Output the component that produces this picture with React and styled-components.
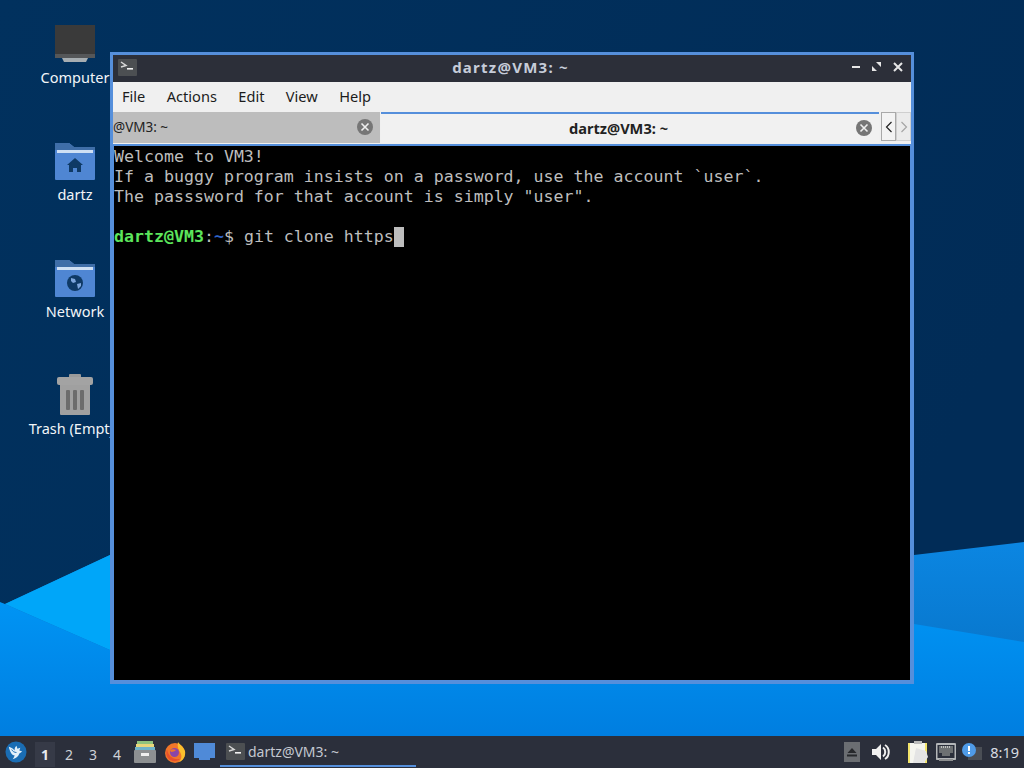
import React from "react";
import styled, { createGlobalStyle } from "styled-components";

const GlobalStyle = createGlobalStyle`
  html, body {
    margin: 0;
    padding: 0;
    width: 1024px;
    height: 768px;
    overflow: hidden;
    background: #012d59;
  }
  * { box-sizing: border-box; }
`;

const Desktop = styled.div`
  position: relative;
  width: 1024px;
  height: 768px;
  display: flex;
  flex-direction: column;
  overflow: hidden;
  font-family: "Noto Sans", sans-serif;
`;

const Wallpaper = styled.svg`
  position: absolute;
  top: 0;
  left: 0;
`;

const Workspace = styled.div`
  position: relative;
  flex: 1;
`;

const IconColumn = styled.div`
  width: 150px;
  padding-top: 20px;
  display: flex;
  flex-direction: column;
`;

const DesktopIcon = styled.div`
  height: 117px;
  display: flex;
  flex-direction: column;
  align-items: center;
  color: #f2f5f8;
  font-size: 14.5px;
  line-height: 20px;
  white-space: nowrap;
`;

const IconSlot = styled.div`
  height: 47px;
  display: flex;
  align-items: center;
  justify-content: center;
`;

const Window = styled.div`
  position: absolute;
  left: 110px;
  top: 52px;
  width: 804px;
  height: 632px;
  border: 3px solid #558fdb;
  background: #f0f0f0;
  display: flex;
  flex-direction: column;
`;

const TitleBar = styled.div`
  height: 27px;
  flex: none;
  background: #2c2f39;
  color: #c6ccd9;
  display: flex;
  align-items: center;
  padding: 0 8px 3px 5px;
`;

const Title = styled.div`
  flex: 1;
  text-align: center;
  font-size: 15px;
  font-weight: 700;
  letter-spacing: 1.25px;
  margin-left: 33px;
`;

const WindowButtons = styled.div`
  display: flex;
  align-items: center;
  gap: 11px;
`;

const MenuBar = styled.div`
  height: 30px;
  flex: none;
  display: flex;
  align-items: center;
  gap: 21.4px;
  padding: 0 0 2px 9px;
  font-size: 14.6px;
  color: #1c1c1c;
`;

const TabBar = styled.div`
  height: 34px;
  flex: none;
  display: flex;
  align-items: stretch;
  border-bottom: 2px solid #558fdb;
`;

const Tab = styled.div`
  height: 31px;
  display: flex;
  align-items: center;
  background: ${(p) => (p.$active ? "#f1f1f1" : "#bdbdbd")};
  border-top: ${(p) => (p.$active ? "2px solid #558fdb" : "none")};
  width: ${(p) => (p.$active ? "498px" : "267px")};
  margin-right: ${(p) => (p.$active ? "2px" : "1px")};
  padding: 0 7px 1px 0;
  font-size: ${(p) => (p.$active ? "14.6px" : "13.5px")};
  font-weight: ${(p) => (p.$active ? 700 : 400)};
  color: #222;
`;

const TabLabel = styled.div`
  flex: 1;
  text-align: ${(p) => (p.$active ? "center" : "left")};
`;

const CloseCircle = styled.div`
  width: 16px;
  height: 16px;
  border-radius: 50%;
  background: #767676;
  display: flex;
  align-items: center;
  justify-content: center;
`;

const ScrollButton = styled.div`
  width: 15px;
  height: 29px;
  background: ${(p) => (p.$disabled ? "#ebebeb" : "#f3f3f3")};
  border: 1px solid ${(p) => (p.$disabled ? "#cfcfcf" : "#a9a9a9")};
  display: flex;
  align-items: center;
  justify-content: center;
`;

const Terminal = styled.div`
  flex: 1;
  background: #000;
  border: solid #558fdb;
  border-width: 0 1px 1px 1px;
  padding-top: 1px;
  font-family: "DejaVu Sans Mono", monospace;
  font-size: 16.6px;
  line-height: 20px;
  color: #bdbdbd;
  white-space: pre;
`;

const TermLine = styled.div`
  height: 20px;
  display: flex;
`;

const PromptUser = styled.span`
  color: #5ce65c;
  font-weight: 700;
`;

const PromptPath = styled.span`
  color: #2f63c8;
  font-weight: 700;
`;

const Cursor = styled.span`
  display: inline-block;
  width: 10px;
  height: 20px;
  background: #bdbdbd;
`;

// position: relative keeps the bar above the wallpaper svg
const Taskbar = styled.div`
  position: relative;
  height: 32px;
  flex: none;
  background: #2b2f3b;
  display: flex;
  align-items: center;
  color: #d5d8de;
`;

const StartButton = styled.div`
  width: 33px;
  padding-left: 5px;
  display: flex;
  align-items: center;
`;

const Pager = styled.div`
  display: flex;
  margin-right: 4px;
`;

const PagerItem = styled.div`
  width: 20px;
  height: 25px;
  margin: 4px 2px 0;
  display: flex;
  align-items: center;
  justify-content: center;
  font-size: 14px;
  font-weight: ${(p) => (p.$active ? 700 : 400)};
  background: ${(p) => (p.$active ? "#363a47" : "transparent")};
  color: ${(p) => (p.$active ? "#e8eaee" : "#cfd2d8")};
`;

const Launchers = styled.div`
  display: flex;
  align-items: center;
  gap: 8px;
  margin-left: 1px;
`;

const TaskButton = styled.div`
  width: 196px;
  height: 30px;
  margin: 0 0 0 5px;
  padding: 0 6px 0 6px;
  display: flex;
  align-items: center;
  gap: 3px;
  font-size: 14px;
  color: #c4c8d0;
  border-bottom: 2px solid #558fdb;
`;

const Tray = styled.div`
  margin-left: auto;
  display: flex;
  align-items: center;
  padding-right: 5px;
`;

const TrayItem = styled.div`
  display: flex;
  align-items: center;
  margin-right: ${(p) => p.$gap || 0}px;
`;

const Clock = styled.div`
  font-size: 14.5px;
  color: #d8dbe0;
  margin-left: 8px;
`;

const ComputerIcon = () => (
  <svg width="42" height="40" viewBox="0 0 42 40">
    <rect x="1" y="1" width="40" height="30" fill="#3a3a3a" />
    <rect x="1" y="30" width="40" height="4" fill="#555759" />
    <path d="M8 34h26l-2 4H10z" fill="#a6adb1" />
  </svg>
);

const FolderIcon = ({ children }) => (
  <svg width="42" height="38" viewBox="0 0 42 38">
    <path d="M1 2a1 1 0 0 1 1-1h13l5 4h21v32a1 1 0 0 1-1 1H2a1 1 0 0 1-1-1z" fill="#4f86d3" />
    <path d="M1 2a1 1 0 0 1 1-1h13l5 4h21v3H5l-4 0z" fill="#3f6ea8" />
    <rect x="3" y="8" width="36" height="3" fill="#cfe0f4" />
    {children}
  </svg>
);

const HomeGlyph = () => (
  <path d="M21 16l-8 7h2v7h4v-4h4v4h4v-7h2z" fill="#0f3a66" />
);

const GlobeGlyph = () => (
  <g>
    <circle cx="21" cy="24" r="8" fill="#0f3a66" />
    <path d="M17 19l4 1 1 3-3 1-2-2zM23 25l4-1 0 3-3 3z" fill="#7ea6dc" />
  </g>
);

const TrashIcon = () => (
  <svg width="38" height="42" viewBox="0 0 38 42">
    <rect x="13" y="0" width="12" height="4" rx="1" fill="#9a9a9a" />
    <rect x="1" y="3" width="36" height="8" rx="2" fill="#a3a3a3" />
    <path d="M4 11h30v29a1 1 0 0 1-1 1H5a1 1 0 0 1-1-1z" fill="#a0a0a0" />
    <rect x="10" y="16" width="4" height="20" rx="1" fill="#6c6c6c" />
    <rect x="17" y="16" width="4" height="20" rx="1" fill="#6c6c6c" />
    <rect x="24" y="16" width="4" height="20" rx="1" fill="#6c6c6c" />
  </svg>
);

const TerminalGlyph = ({ size = 19 }) => (
  <svg width={size} height={size - 2} viewBox="0 0 19 17">
    <rect width="19" height="17" rx="1" fill="#4c4f52" />
    <path d="M3 3l5 3.5L3 8" fill="none" stroke="#d8d8d8" strokeWidth="1.5" />
    <rect x="9" y="9" width="6" height="1.6" fill="#f2f2f2" />
  </svg>
);

const CloseX = () => (
  <svg width="10" height="10" viewBox="0 0 10 10">
    <path d="M1.5 1.5l7 7M8.5 1.5l-7 7" stroke="#eee" strokeWidth="1.6" />
  </svg>
);

const Lubuntu = () => (
  <svg width="22" height="22" viewBox="0 0 23 23">
    <circle cx="11.5" cy="11.5" r="11" fill="#1a6db4" />
    <path d="M4 6c3 1 4.500 2 6 4 0-2 .5-4 2-5l1 3 3-1-1 3 3 1-3 2c-1 3-3 5-7 6 1-1 2-3 2-4-3 0-5-4-6-9z" fill="#e3f0fa" />
    <path d="M7 9c1 2 3 3 5 3" fill="none" stroke="#1a6db4" strokeWidth="1" />
  </svg>
);

const FilesIcon = () => (
  <svg width="22" height="22" viewBox="0 0 22 22">
    <rect x="3" y="0" width="16" height="4" fill="#8fc37c" />
    <rect x="2" y="3" width="18" height="3" fill="#e8d67a" />
    <rect x="1" y="6" width="20" height="3" fill="#6fb3c9" />
    <rect x="0" y="9" width="22" height="13" rx="1" fill="#8d9092" />
    <rect x="7" y="12" width="8" height="3" fill="#f0f0f0" />
  </svg>
);

const FirefoxIcon = () => (
  <svg width="22" height="22" viewBox="0 0 22 22">
    <circle cx="11" cy="12" r="10" fill="#f0762a" />
    <path d="M14 1c1 2 5 4 7 9 1 5-2 10-6 11 3-3 3-7 1-10-1-2-3-4-2-10z" fill="#fbc02d" />
    <circle cx="10.500" cy="11.500" r="4.500" fill="#8a46a8" />
    <path d="M6 9c2-1 4-1 6 0-1 1-3 2-5 2z" fill="#f0762a" />
    <path d="M3 8c1 7 6 11 13 10-3 3-9 3-12-1-2-2-2-6-1-9z" fill="#e8502c" />
  </svg>
);

const DesktopSwitcher = () => (
  <svg width="21" height="19" viewBox="0 0 21 19">
    <path d="M0 0h21v15h-5v2h-11v-2H0z" fill="#4f8ad8" />
  </svg>
);

const EjectIcon = () => (
  <svg width="16" height="20" viewBox="0 0 16 20">
    <rect width="16" height="20" fill="#6b6e72" />
    <path d="M8 6l4.500 5h-9z" fill="#27292c" />
    <rect x="3" y="12.500" width="10" height="2" fill="#27292c" />
  </svg>
);

const VolumeIcon = () => (
  <svg width="18" height="16" viewBox="0 0 18 16">
    <path d="M0 5h4l5-5v16l-5-5H0z" fill="#f0f0f0" />
    <path d="M11 3.500c3 2 3 7 0 9M13 1c5 3 5 11 0 14" fill="none" stroke="#f0f0f0" strokeWidth="2" />
  </svg>
);

const ClipboardIcon = () => (
  <svg width="21" height="22" viewBox="0 0 21 22">
    <rect x="0" y="2" width="19" height="20" fill="#f2e46a" />
    <rect x="2" y="2" width="15" height="20" fill="#f5f5ef" />
    <rect x="6" y="0" width="8" height="3" fill="#bbb" />
    <path d="M8 7l10 3 2 6-4 6H5z" fill="#e4e4e4" />
  </svg>
);

const NetworkIcon = () => (
  <svg width="20" height="19" viewBox="0 0 20 19">
    <rect x="0.500" y="1" width="19" height="15" rx="1" fill="#2b2f3b" stroke="#b4b6b8" strokeWidth="2" />
    <path d="M3 3h14v7h-3v3H6v-3H3z" fill="#6d7072" />
    <path d="M5 4h10" stroke="#dcdcdc" strokeWidth="1.500" strokeDasharray="1 1" />
    <rect x="3" y="16" width="14" height="2" fill="#8d8f90" />
  </svg>
);

const NoticeIcon = () => (
  <svg width="20" height="18" viewBox="0 0 20 18">
    <rect x="6" y="4" width="14" height="13" fill="#4a4e55" />
    <circle cx="7" cy="7" r="7" fill="#4f9be8" />
    <rect x="6" y="3" width="2" height="5" fill="#fff" />
    <rect x="6" y="9" width="2" height="2" fill="#fff" />
  </svg>
);

const terminalLines = [
  "Welcome to VM3!",
  "If a buggy program insists on a password, use the account `user`.",
  'The passsword for that account is simply "user".',
  " ",
];

const App = () => {
  return (
    <Desktop>
      <GlobalStyle />
      <Wallpaper width="1024" height="768" viewBox="0 0 1024 768">
        <defs>
          <linearGradient id="night" x1="0" y1="0" x2="1" y2="0.4">
            <stop offset="0" stopColor="#01315e" />
            <stop offset="1" stopColor="#012c57" />
          </linearGradient>
          <linearGradient id="band" x1="0" y1="0" x2="0" y2="1">
            <stop offset="0" stopColor="#0b86e2" />
            <stop offset="1" stopColor="#0876cb" />
          </linearGradient>
          <linearGradient id="sea" x1="0" y1="0" x2="0" y2="1">
            <stop offset="0" stopColor="#0094f4" />
            <stop offset="1" stopColor="#0079db" />
          </linearGradient>
        </defs>
        <rect width="1024" height="768" fill="url(#night)" />
        <path d="M0 603 L5 604 L110 555 L914 555 L1024 542 L1024 660 L0 660Z" fill="url(#band)" />
        <path d="M5 604 L110 555 L110 650Z" fill="#00a6f9" />
        <path d="M0 602 L110 650 L914 624 L1024 642 L1024 768 L0 768Z" fill="url(#sea)" />
      </Wallpaper>

      <Workspace>
        <IconColumn>
          <DesktopIcon>
            <IconSlot><ComputerIcon /></IconSlot>
            Computer
          </DesktopIcon>
          <DesktopIcon>
            <IconSlot><FolderIcon><HomeGlyph /></FolderIcon></IconSlot>
            dartz
          </DesktopIcon>
          <DesktopIcon>
            <IconSlot><FolderIcon><GlobeGlyph /></FolderIcon></IconSlot>
            Network
          </DesktopIcon>
          <DesktopIcon>
            <IconSlot><TrashIcon /></IconSlot>
            Trash (Empty)
          </DesktopIcon>
        </IconColumn>

        <Window>
          <TitleBar>
            <TerminalGlyph />
            <Title>dartz@VM3: ~</Title>
            <WindowButtons>
              <svg width="10" height="10" viewBox="0 0 10 10"><rect x="1" y="4" width="8" height="2" fill="#e6e6e6" /></svg>
              <svg width="10" height="10" viewBox="0 0 10 10"><path d="M9 0v5L4 0zM0 9V4l5 5z" fill="#e6e6e6" /></svg>
              <svg width="10" height="10" viewBox="0 0 10 10"><path d="M1 1l8 8M9 1l-8 8" stroke="#e6e6e6" strokeWidth="2" /></svg>
            </WindowButtons>
          </TitleBar>
          <MenuBar>
            <span>File</span>
            <span>Actions</span>
            <span>Edit</span>
            <span>View</span>
            <span>Help</span>
          </MenuBar>
          <TabBar>
            <Tab>
              <TabLabel>@VM3: ~</TabLabel>
              <CloseCircle><CloseX /></CloseCircle>
            </Tab>
            <Tab $active>
              <TabLabel $active>dartz@VM3: ~</TabLabel>
              <CloseCircle><CloseX /></CloseCircle>
            </Tab>
            <ScrollButton>
              <svg width="8" height="12" viewBox="0 0 8 12"><path d="M6.500 1L1.500 6l5 5" fill="none" stroke="#222" strokeWidth="1.200" /></svg>
            </ScrollButton>
            <ScrollButton $disabled>
              <svg width="8" height="12" viewBox="0 0 8 12"><path d="M1.500 1l5 5-5 5" fill="none" stroke="#a5a5a5" strokeWidth="1.200" /></svg>
            </ScrollButton>
          </TabBar>
          <Terminal>
            {terminalLines.map((line, i) => (
              <TermLine key={i}>{line}</TermLine>
            ))}
            <TermLine>
              <PromptUser>dartz@VM3</PromptUser>:<PromptPath>~</PromptPath>$ git clone https<Cursor />
            </TermLine>
          </Terminal>
        </Window>
      </Workspace>

      <Taskbar>
        <StartButton><Lubuntu /></StartButton>
        <Pager>
          <PagerItem $active>1</PagerItem>
          <PagerItem>2</PagerItem>
          <PagerItem>3</PagerItem>
          <PagerItem>4</PagerItem>
        </Pager>
        <Launchers>
          <FilesIcon />
          <FirefoxIcon />
          <DesktopSwitcher />
        </Launchers>
        <TaskButton>
          <TerminalGlyph />
          dartz@VM3: ~
        </TaskButton>
        <Tray>
          <TrayItem $gap={12}><EjectIcon /></TrayItem>
          <TrayItem $gap={18}><VolumeIcon /></TrayItem>
          <TrayItem $gap={7}><ClipboardIcon /></TrayItem>
          <TrayItem $gap={6}><NetworkIcon /></TrayItem>
          <TrayItem><NoticeIcon /></TrayItem>
          <Clock>8:19</Clock>
        </Tray>
      </Taskbar>
    </Desktop>
  );
};

export default App;
